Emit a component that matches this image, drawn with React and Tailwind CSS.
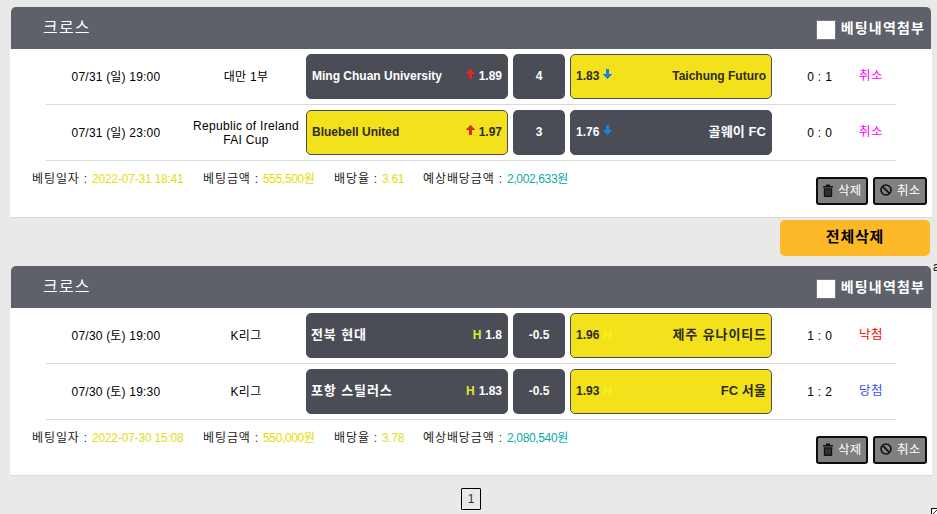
const slips = [
  {
    id: 1,
    date: '2022-07-31 18:41',
    amount: '555,500원',
    rate: '3.61',
    expected: '2,002,633원',
    footerClass: 'h-14',
    games: [
      { time: '07/31 (일) 19:00', league: ['대만 1부'], home: 'Ming Chuan University', homeRate: '1.89', line: '4', away: 'Taichung Futuro', awayRate: '1.83', type: 'cross', pick: 'away', score: ['0', '1'], status: 'cancel' },
      { time: '07/31 (일) 23:00', league: ['Republic of Ireland', 'FAI Cup'], home: 'Bluebell United', homeRate: '1.97', line: '3', away: '골웨이 FC', awayRate: '1.76', type: 'cross', pick: 'home', score: ['0', '0'], status: 'cancel' },
    ],
  },
  {
    id: 2,
    date: '2022-07-30 15:08',
    amount: '550,000원',
    rate: '3.78',
    expected: '2,080,540원',
    footerClass: 'h-[55px]',
    games: [
      { time: '07/30 (토) 19:00', league: ['K리그'], home: '전북 현대', homeRate: '1.8', line: '-0.5', away: '제주 유나이티드', awayRate: '1.96', type: 'handicap', pick: 'away', score: ['1', '0'], status: 'lose' },
      { time: '07/30 (토) 19:30', league: ['K리그'], home: '포항 스틸러스', homeRate: '1.83', line: '-0.5', away: 'FC 서울', awayRate: '1.93', type: 'handicap', pick: 'away', score: ['1', '2'], status: 'win' },
    ],
  },
];

const statusMap = {
  cancel: { label: '취소', className: 'text-[#ff00ff]' },
  lose: { label: '낙첨', className: 'text-[#ff0000]' },
  win: { label: '당첨', className: 'text-[#3a4df5]' },
};

// Hangul names are set a little wider than latin ones
const nameClass = (name) => {
  if (!/[가-힣]/.test(name)) return '';
  return /[A-Z]/.test(name) ? 'text-[13px] tracking-[0.1px]' : 'text-[13px] tracking-[0.9px] -ml-px -mr-px';
};

const ArrowIcon = ({ down }) => (
  <svg width="9" height="10" viewBox="0 0 9 10" shapeRendering="crispEdges" className={down ? 'text-[#1683e0]' : 'text-[#e0281e]'}>
    {down ? (
      <path fill="currentColor" d="M3 0h3v5h3v1H8v1H7v1H6v1H5v1H4V9H3V8H2V7H1V6H0V5h3z" />
    ) : (
      <path fill="currentColor" d="M4 0h1v1h1v1h1v1h1v1h1v1H6v5H3V5H0V4h1V3h1V2h1V1h1z" />
    )}
  </svg>
);

const TrashIcon = () => (
  <svg width="10" height="13" viewBox="0 0 10 13" className="-mt-0.5">
    <path fill="#111" d="M3 0.5h4V2h3v1.5H0V2h3zM.8 4.3h8.4v7.7a1 1 0 0 1-1 1H1.8a1 1 0 0 1-1-1z" />
    <path stroke="#6b6b6b" strokeWidth="0.7" d="M3 5.5v6M5 5.5v6M7 5.5v6" />
  </svg>
);

const BanIcon = () => (
  <svg width="12" height="12" viewBox="0 0 12 12" fill="none" stroke="#111" strokeWidth="1.6" className="-mt-0.5">
    <circle cx="6" cy="6" r="5" />
    <path d="M2.6 2.6l6.8 6.8" />
  </svg>
);

function Mark({ type, side, picked }) {
  if (type === 'handicap') {
    return <span className={picked ? 'text-[#f6f312]' : 'text-[#dcec2c]'}>H</span>;
  }
  return <span className="mb-[3px]"><ArrowIcon down={side === 'away'} /></span>;
}

function TeamBox({ game, side }) {
  const picked = game.pick === side;
  const name = <span className={`whitespace-nowrap ${nameClass(game[side])}`}>{game[side]}</span>;
  const mark = <Mark type={game.type} side={side} picked={picked} />;
  return (
    <div className={`flex h-[45px] w-[202px] items-center justify-between rounded-[5px] border border-[#4b4d56] px-[5px] pb-0.5 ${picked ? 'bg-[#f3e11b] text-[#2d2c1c]' : 'bg-[#4b4d56] text-white'}`}>
      {side === 'home' ? (
        <>
          {name}
          <span className="flex items-center gap-1">{mark}{game.homeRate}</span>
        </>
      ) : (
        <>
          <span className="flex items-center gap-1">{game.awayRate}{mark}</span>
          {name}
        </>
      )}
    </div>
  );
}

function GameRow({ game }) {
  const status = statusMap[game.status];
  return (
    <div className="ml-9 flex h-14 w-[850px] items-center border-b border-[#d9d9d9] text-[12px] text-black">
      <div className="w-[140px] text-center tracking-[0.2px]">{game.time}</div>
      <div className="w-[120px] text-center leading-[14px] tracking-[0.3px]">
        {game.league.map(line => <div key={line} className="whitespace-nowrap">{line}</div>)}
      </div>
      <div className="flex gap-[5px] font-bold">
        <TeamBox game={game} side="home" />
        <div className="flex h-[45px] w-[52px] items-center justify-center rounded-[5px] bg-[#4b4d56] pb-0.5 text-white">{game.line}</div>
        <TeamBox game={game} side="away" />
      </div>
      <div className="flex w-[74px] justify-center gap-1 pl-[21px]">
        <span>{game.score[0]}</span><span>:</span><span>{game.score[1]}</span>
      </div>
      <div className={`w-[50px] text-center text-[12.5px] tracking-[0.5px] ${status.className}`}>{status.label}</div>
    </div>
  );
}

function ActionButton({ icon, label, className }) {
  return (
    <button className={`flex h-7 items-center rounded-[3px] border-2 border-black/90 bg-[#808080] pl-[5px] text-[12.5px] text-white ${className}`}>
      {icon}
      <span className="ml-[5px] whitespace-nowrap tracking-[0.3px]">{label}</span>
    </button>
  );
}

function SummaryItem({ label, value, labelClass, valueClass }) {
  return (
    <>
      <span className={`flex justify-between pr-1 tracking-[0.9px] ${labelClass}`}>
        <span>{label}</span>
        <span>:</span>
      </span>
      <span className={valueClass}>{value}</span>
    </>
  );
}

function BetSlip({ slip }) {
  return (
    <section className="ml-2.5 w-[922px] border-b border-[#d9d9d9] bg-white">
      <div className="bg-[#e9e9e9] px-px">
        <header className="flex h-[42px] items-center rounded-t-[5px] bg-[#5e6169] pl-8 pr-1.5 text-white">
          <h2 className="text-[16px] tracking-[1.2px]">크로스</h2>
          <label className="ml-auto flex items-center gap-[5px] text-[14px] font-bold tracking-[1.15px]">
            <span className="mt-1 size-5 border border-[#767676] bg-white" />
            <span>베팅내역첨부</span>
          </label>
        </header>
      </div>
      {slip.games.map(game => <GameRow key={game.time + game.home} game={game} />)}
      <div className={`flex justify-between pl-[22px] pr-[5px] text-[12px] ${slip.footerClass}`}>
        <div className="flex whitespace-nowrap pt-[9px] text-[#222]">
          <SummaryItem label="베팅일자" value={slip.date} labelClass="w-[60px]" valueClass="w-[111px] tracking-[-0.2px] text-[#e6dc14]" />
          <SummaryItem label="베팅금액" value={slip.amount} labelClass="w-[60px]" valueClass="w-[71px] tracking-[-0.35px] text-[#e6dc00]" />
          <SummaryItem label="배당율" value={slip.rate} labelClass="w-12" valueClass="w-[41px] tracking-[-0.3px] text-[#e6dc14]" />
          <SummaryItem label="예상배당금액" value={slip.expected} labelClass="w-[84px]" valueClass="tracking-[-0.35px] text-[#0aa8a8]" />
        </div>
        <div className="flex gap-[5px] pt-4">
          <ActionButton icon={<TrashIcon />} label="삭제" className="w-[52px]" />
          <ActionButton icon={<BanIcon />} label="취소" className="w-[54px]" />
        </div>
      </div>
    </section>
  );
}

export default function App() {
  return (
    <div className="relative h-[514px] w-[937px] overflow-hidden bg-[#e9e9e9] pt-[7px] font-['Liberation_Sans','Noto_Sans_CJK_KR',sans-serif]">
      <BetSlip slip={slips[0]} />
      <div className="flex h-12 justify-end pr-[7px] pt-0.5">
        <button className="h-9 w-[150px] rounded-[5px] bg-[#fcb827] pb-0.5 text-[15px] font-bold tracking-[0.8px] text-black">전체삭제</button>
      </div>
      <BetSlip slip={slips[1]} />
      <div className="mt-3 flex justify-center">
        <button className="ml-[5px] flex h-[22px] w-5 items-center justify-center rounded-[1px] border border-black text-[12px] text-[#333]">1</button>
      </div>
      <span className="absolute left-[933px] top-[259px] text-[12px] leading-4">a</span>
      <svg className="absolute left-[931px] top-[508px]" width="6" height="6" viewBox="0 0 6 6" shapeRendering="crispEdges">
        <path fill="#fff" stroke="#111" d="M.5 .5h8v8h-8z" />
        <path stroke="#333" d="M2 6l4-4" />
      </svg>
    </div>
  );
}
